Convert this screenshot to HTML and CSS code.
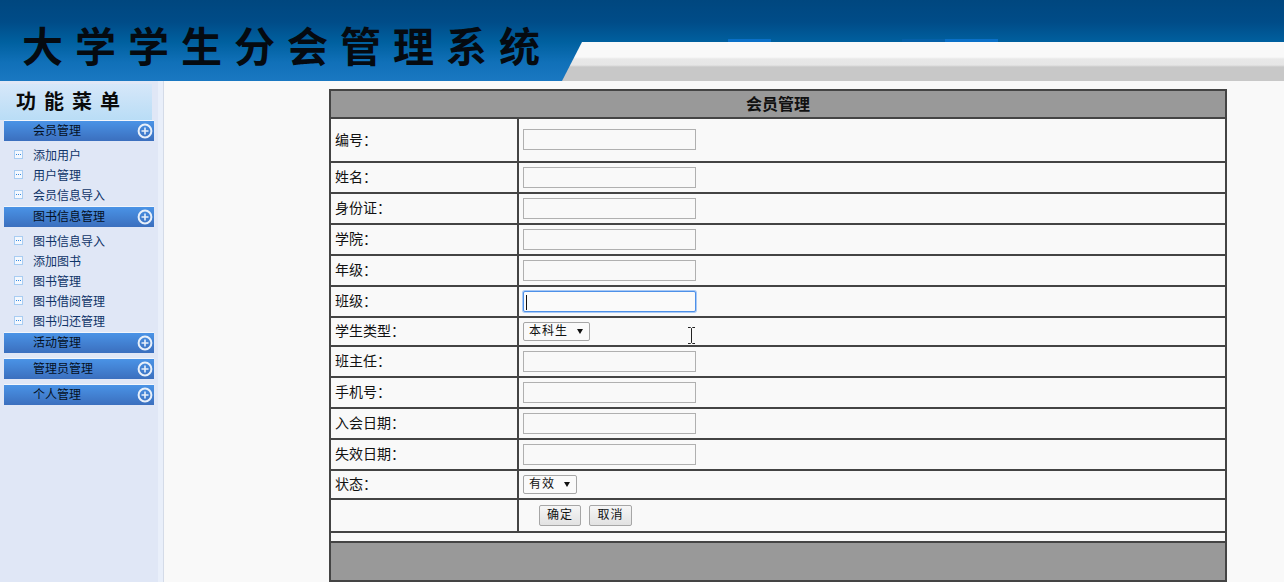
FILE: index.html
```html
<!DOCTYPE html>
<html lang="zh-CN">
<head>
<meta charset="utf-8">
<title>大学学生分会管理系统</title>
<link rel="stylesheet" href="styles.css">
</head>
<body>
<svg class="defs" width="0" height="0" aria-hidden="true">
  <symbol id="plus" viewBox="0 0 16 16">
    <circle cx="8" cy="8" r="6.4" fill="none" stroke="#e8f0fa" stroke-width="2"/>
    <path d="M4.500 8h7M8 4.500v7" stroke="#e8f0fa" stroke-width="1.6"/>
  </symbol>
  <symbol id="leaf" viewBox="0 0 9 9">
    <rect x="0.5" y="0.5" width="8" height="8" fill="#f4f8fe" stroke="#a9cdf2"/>
    <path d="M2 4.500h1M4 4.500h1M6 4.500h1" stroke="#3a8ce0"/>
  </symbol>
</svg>
<header class="banner">
  <h1 class="brand">大学学生分会管理系统</h1>
  <div class="banner-wave"></div>
</header>
<div class="layout">
  <aside class="sidebar">
    <div class="menu">
      <div class="menu-title">功能菜单</div>
      <div class="group-head"><span>会员管理</span><svg class="plus"><use href="#plus"/></svg></div>
      <ul class="items">
        <li><svg class="leaf"><use href="#leaf"/></svg>添加用户</li>
        <li><svg class="leaf"><use href="#leaf"/></svg>用户管理</li>
        <li><svg class="leaf"><use href="#leaf"/></svg>会员信息导入</li>
      </ul>
      <div class="group-head"><span>图书信息管理</span><svg class="plus"><use href="#plus"/></svg></div>
      <ul class="items">
        <li><svg class="leaf"><use href="#leaf"/></svg>图书信息导入</li>
        <li><svg class="leaf"><use href="#leaf"/></svg>添加图书</li>
        <li><svg class="leaf"><use href="#leaf"/></svg>图书管理</li>
        <li><svg class="leaf"><use href="#leaf"/></svg>图书借阅管理</li>
        <li><svg class="leaf"><use href="#leaf"/></svg>图书归还管理</li>
      </ul>
      <div class="group-head"><span>活动管理</span><svg class="plus"><use href="#plus"/></svg></div>
      <div class="group-head spaced"><span>管理员管理</span><svg class="plus"><use href="#plus"/></svg></div>
      <div class="group-head spaced"><span>个人管理</span><svg class="plus"><use href="#plus"/></svg></div>
    </div>
  </aside>
  <main class="content">
    <table class="form">
      <colgroup><col class="col-label"><col></colgroup>
      <tr class="r-head"><th colspan="2">会员管理</th></tr>
      <tr class="r-tall"><td>编号：</td><td><input class="field" type="text"></td></tr>
      <tr class="r-std"><td>姓名：</td><td><input class="field" type="text"></td></tr>
      <tr class="r-std"><td>身份证：</td><td><input class="field" type="text"></td></tr>
      <tr class="r-std"><td>学院：</td><td><input class="field" type="text"></td></tr>
      <tr class="r-std"><td>年级：</td><td><input class="field" type="text"></td></tr>
      <tr class="r-std"><td>班级：</td><td><input class="field focused" type="text"></td></tr>
      <tr class="r-sel"><td>学生类型：</td><td><span class="select sel-type"><select><option>本科生</option></select></span></td></tr>
      <tr class="r-std"><td>班主任：</td><td><input class="field" type="text"></td></tr>
      <tr class="r-std"><td>手机号：</td><td><input class="field" type="text"></td></tr>
      <tr class="r-std"><td>入会日期：</td><td><input class="field" type="text"></td></tr>
      <tr class="r-std"><td>失效日期：</td><td><input class="field" type="text"></td></tr>
      <tr class="r-sel"><td>状态：</td><td><span class="select sel-state"><select><option>有效</option></select></span></td></tr>
      <tr class="r-btn"><td></td><td class="actions"><button type="button">确定</button><button type="button">取消</button></td></tr>
      <tr class="r-gap"><td colspan="2"></td></tr>
      <tr class="r-foot"><td colspan="2"></td></tr>
    </table>
    <svg class="ibeam" width="9" height="17" viewBox="0 0 9 17" aria-hidden="true">
      <path d="M1 .5h2.500l1 1 1-1H8M4.500 1.500v14M1 16.500h2.500l1-1 1 1H8" fill="none" stroke="#222"/>
    </svg>
  </main>
</div>
</body>
</html>
```
FILE: styles.css
```css
* { box-sizing: border-box; }
html, body { margin: 0; height: 582px; overflow: hidden; }
body {
  background: #f9f9f9;
  font-family: "Liberation Sans", "Noto Sans CJK SC", sans-serif;
  color: #111;
}
.defs { position: absolute; }

.banner {
  position: relative;
  height: 81px;
  background:
    linear-gradient(#0a70c8, #0a70c8) no-repeat 728px 39px / 43px 3px,
    linear-gradient(#0a70c8, #0a70c8) no-repeat 945px 39px / 53px 3px,
    linear-gradient(#0560a8, #0560a8) no-repeat 902px 39px / 43px 3px,
    linear-gradient(#00477f 0, #004c88 22px, #00609f 42px, #1070b8 62px, #1a78c2 81px);
  overflow: hidden;
}
.brand {
  margin: 0;
  padding: 0 0 0 22px;
  font: 700 41px/88px "Noto Sans CJK SC", sans-serif;
  letter-spacing: 12px;
  color: #050a10;
  white-space: nowrap;
}
.banner-wave {
  position: absolute;
  right: 0;
  bottom: 0;
  width: 722px;
  height: 39px;
  background: linear-gradient(#f9f9f9 0, #f9f9f9 15px, #e8e8e8 17px, #e6e6e6 23px, #c8c8c8 25px, #c8c8c8 39px);
  clip-path: polygon(20px 0, 100% 0, 100% 100%, 0 100%);
}

.layout { display: flex; height: 501px; }
.sidebar {
  flex: 0 0 164px;
  background: #e9effa;
  border-right: 1px solid #d4dbe8;
}
.menu {
  width: 158px;
  height: 100%;
  background: #e0e7f6;
  padding-top: 3px;
}
.menu-title {
  width: 152px;
  height: 36px;
  padding-left: 16px;
  background: linear-gradient(#d6e7f9, #b9ddf6);
  font: 700 20px/34px "Noto Sans CJK SC", sans-serif;
  letter-spacing: 8px;
  color: #0a0a0a;
  white-space: nowrap;
}
.group-head {
  display: flex;
  align-items: center;
  justify-content: space-between;
  width: 150px;
  height: 20px;
  margin: 1px 0 0 4px;
  padding: 0 1px 0 29px;
  background: linear-gradient(#4a93e6, #3b6fbe);
  box-shadow: 0 -1px 0 #f2f6fc;
  font-size: 12px;
  line-height: 18px;
  color: #05101f;
}
.group-head span { padding-bottom: 1px; }
.group-head.spaced { margin-top: 6px; }
.plus { width: 16px; height: 16px; }
.items {
  list-style: none;
  margin: 0;
  padding: 3px 0 2px 14px;
  font-size: 12px;
  color: #0f3468;
}
.items li {
  display: flex;
  align-items: center;
  height: 20px;
  white-space: nowrap;
}
.leaf { width: 9px; height: 9px; margin-right: 10px; flex: none; }

.content { position: relative; flex: 1; padding: 8px 0 0 165px; }
.form {
  width: 898px;
  table-layout: fixed;
  border-collapse: collapse;
  font-size: 14px;
  line-height: 16px;
}
.col-label { width: 188px; }
.form th, .form td {
  border: 2px solid #444;
  padding: 0 0 2px 4px;
  vertical-align: middle;
}
.form th {
  background: #999;
  padding: 2px 0 0;
  font-size: 16px;
  font-weight: 700;
  color: #111;
}
.r-head { height: 28px; }
.r-tall { height: 44px; }
.r-tall td { padding-bottom: 0; }
.r-tall td + td { padding-bottom: 2px; }
.r-std { height: 31px; }
.r-std td + td, .r-sel td + td { padding-bottom: 0; }
.r-sel { height: 29px; }
.r-btn { height: 33px; }
.r-gap { height: 10px; }
.r-foot { height: 39px; }
.form .r-foot td { background: #999; }

.field {
  display: block;
  width: 173px;
  height: 21px;
  margin: 0;
  border: 1px solid #b0b0b0;
  background: #f9f9f9;
  padding: 0;
}
.field.focused {
  border: 1px solid #4d90e8;
  border-radius: 2px;
  box-shadow: 0 0 0 1px #a9c9f5;
  background: #fafafa linear-gradient(#111, #111) no-repeat 2px 3px / 1px 15px;
}
.select { position: relative; display: block; height: 19px; }
.sel-type { width: 67px; }
.sel-state { width: 54px; }
.select select {
  appearance: none;
  display: block;
  width: 100%;
  height: 100%;
  margin: 0;
  padding: 0 0 0 5px;
  border: 1px solid #a6a6a6;
  border-radius: 2px;
  background: #fafafa;
  font: 12px/17px "Liberation Sans", "Noto Sans CJK SC", sans-serif;
  letter-spacing: 1px;
  color: #111;
}
.select::after {
  content: "";
  position: absolute;
  right: 7px;
  top: 7px;
  border-left: 3.500px solid transparent;
  border-right: 3.500px solid transparent;
  border-top: 5px solid #111;
}
.form .actions { padding: 0 0 0 4px; }
.actions button {
  width: 42px;
  height: 21px;
  margin: 0 8px 0 0;
  padding: 0;
  border: 1px solid #a6a6a6;
  border-radius: 2px;
  background: linear-gradient(#f6f6f6, #e2e2e2);
  font: 12px/17px "Liberation Sans", "Noto Sans CJK SC", sans-serif;
  letter-spacing: 1px;
  color: #111;
}
.actions button:first-child { margin-left: 16px; }
.actions button:last-child { width: 43px; }
.ibeam { position: absolute; left: 523px; top: 246px; }
```
